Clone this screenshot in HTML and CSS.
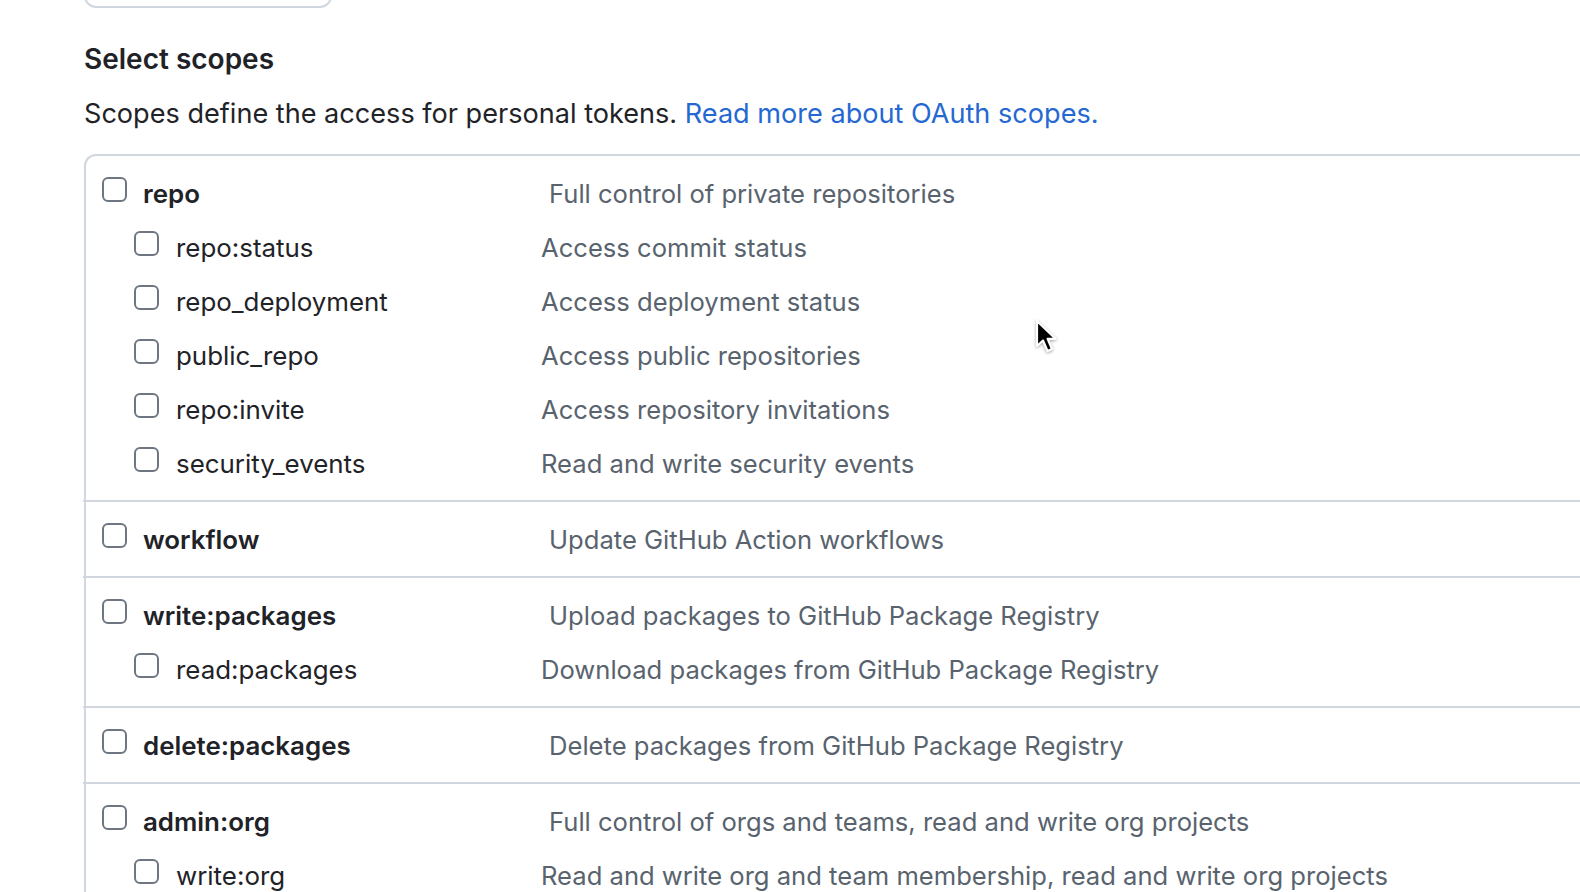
FILE: index.html
```html
<!DOCTYPE html>
<html lang="en">
<head>
<meta charset="utf-8">
<title>Select scopes</title>
<link rel="stylesheet" href="styles.css">
</head>
<body>
<div class="page">
  <div class="token-input"></div>
  <h2 class="title">Select scopes</h2>
  <p class="lead">Scopes define the access for personal tokens. <a href="#" class="link">Read more about OAuth scopes.</a></p>
  <div class="scopes">
    <div class="group">
      <div class="scope parent"><span class="cb"></span><span class="name">repo</span><span class="desc">Full control of private repositories</span></div>
      <div class="scope child"><span class="cb"></span><span class="name">repo:status</span><span class="desc">Access commit status</span></div>
      <div class="scope child"><span class="cb"></span><span class="name">repo_deployment</span><span class="desc">Access deployment status</span></div>
      <div class="scope child"><span class="cb"></span><span class="name">public_repo</span><span class="desc">Access public repositories</span></div>
      <div class="scope child"><span class="cb"></span><span class="name">repo:invite</span><span class="desc">Access repository invitations</span></div>
      <div class="scope child"><span class="cb"></span><span class="name">security_events</span><span class="desc">Read and write security events</span></div>
    </div>
    <div class="group">
      <div class="scope parent"><span class="cb"></span><span class="name">workflow</span><span class="desc">Update GitHub Action workflows</span></div>
    </div>
    <div class="group">
      <div class="scope parent"><span class="cb"></span><span class="name">write:packages</span><span class="desc">Upload packages to GitHub Package Registry</span></div>
      <div class="scope child"><span class="cb"></span><span class="name">read:packages</span><span class="desc">Download packages from GitHub Package Registry</span></div>
    </div>
    <div class="group">
      <div class="scope parent"><span class="cb"></span><span class="name">delete:packages</span><span class="desc">Delete packages from GitHub Package Registry</span></div>
    </div>
    <div class="group">
      <div class="scope parent"><span class="cb"></span><span class="name">admin:org</span><span class="desc">Full control of orgs and teams, read and write org projects</span></div>
      <div class="scope child"><span class="cb"></span><span class="name">write:org</span><span class="desc">Read and write org and team membership, read and write org projects</span></div>
    </div>
  </div>
</div>
<svg class="cursor" width="24" height="36" viewBox="0 0 24 36" aria-hidden="true">
  <path d="M2 2 L2 27 L8 21.5 L12.5 32 L17 30 L12.6 19.8 L20.5 19.8 Z" fill="#000" stroke="#fff" stroke-width="2.2" stroke-linejoin="round"/>
</svg>
</body>
</html>
```

FILE: styles.css
```css
html, body {
  margin: 0;
  padding: 0;
  background: #ffffff;
  overflow: hidden;
  height: 100%;
}

body {
  font-family: Inter, "Noto Sans", "Liberation Sans", sans-serif;
  color: #1f2328;
  position: relative;
}

.page {
  padding-left: 84px;
}

.token-input {
  width: 244px;
  height: 40px;
  margin-top: -36px;
  border: 2px solid #d0d7de;
  border-radius: 12px;
}

.title {
  margin: 31px 0 0;
  font-size: 28px;
  line-height: 40px;
  font-weight: 600;
  color: #1f2328;
}

.lead {
  margin: 15px 0 0;
  font-size: 27.1px;
  line-height: 40px;
  color: #1f2328;
}

.link {
  color: #2568d2;
  text-decoration: none;
}

.scopes {
  margin-top: 20px;
  width: 1700px;
  border: 2px solid #d0d7de;
  border-right: none;
  border-radius: 12px 0 0 0;
}

.group {
  padding: 10px 0;
}

.group + .group {
  border-top: 2px solid #d0d7de;
  margin-left: -3px;
  padding-left: 3px;
}

.scope {
  display: flex;
  align-items: flex-start;
  height: 54px;
  font-size: 25.9px;
  line-height: 54px;
}

.cb {
  flex: none;
  width: 21px;
  height: 21px;
  margin-top: 11px;
  border: 2px solid #6e7781;
  border-radius: 6px;
  background: #fff;
}

.parent {
  padding-left: 16px;
}

.child {
  padding-left: 48px;
}

.name {
  flex: none;
  padding-left: 16px;
  padding-top: 1px;
  white-space: nowrap;
}

.parent .name {
  width: 406px;
  font-weight: 600;
}

.child .name {
  width: 365px;
  padding-left: 17px;
}

.desc {
  padding-top: 1px;
  font-size: 25.6px;
  color: #59636e;
  white-space: nowrap;
}

.cursor {
  position: absolute;
  left: 1035px;
  top: 319px;
  filter: drop-shadow(0 1px 1.5px rgba(0,0,0,0.35));
}
```
